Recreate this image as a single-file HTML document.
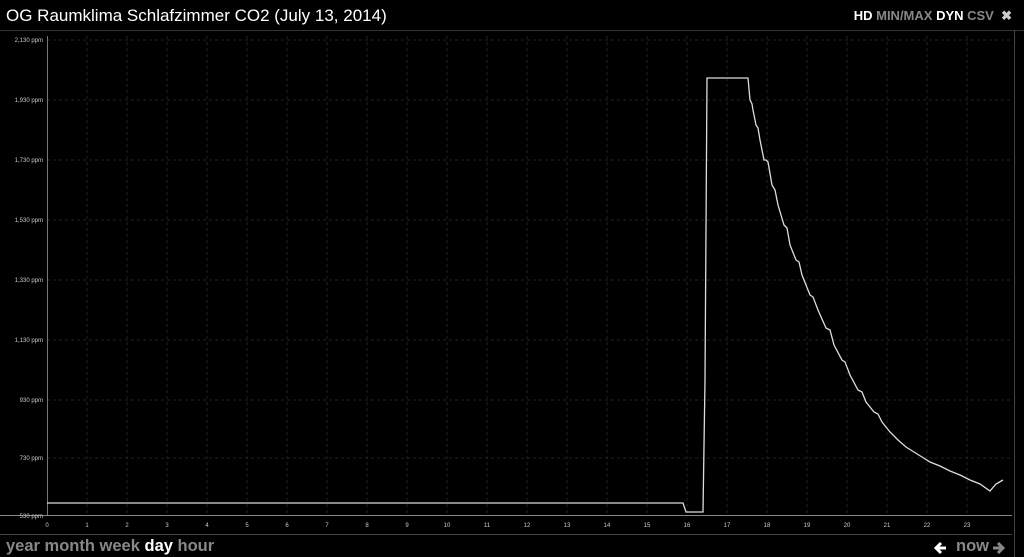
<!DOCTYPE html>
<html><head><style>
body{margin:0;width:1024px;height:557px;background:#000;overflow:hidden;font-family:"Liberation Sans",sans-serif;position:relative}
.t{position:absolute;left:6px;top:6px;color:#fff;font-size:17px}
.tr{position:absolute;right:12px;top:8px;font-size:13px;font-weight:bold;color:#888}
.tr b{color:#fff}
.bl{position:absolute;left:6px;top:537px;font-size:16.5px;font-weight:bold;color:#888}
.bl b{color:#fff}
.br{position:absolute;left:956px;top:537px;font-size:16.5px;font-weight:bold;color:#888}
</style></head><body>
<div class="t">OG Raumklima Schlafzimmer CO2 (July 13, 2014)</div>
<div class="tr"><b>HD</b> MIN/MAX <b>DYN</b> CSV &nbsp;<b style="color:#ccc">✖</b></div>
<svg width="1024" height="557" style="position:absolute;left:0;top:0">
<line x1="0" y1="30.5" x2="1024" y2="30.5" stroke="#333"/>
<g stroke="#222" stroke-dasharray="3,3">
<line x1="87" y1="36" x2="87" y2="514"/><line x1="127" y1="36" x2="127" y2="514"/><line x1="167" y1="36" x2="167" y2="514"/><line x1="207" y1="36" x2="207" y2="514"/><line x1="247" y1="36" x2="247" y2="514"/><line x1="287" y1="36" x2="287" y2="514"/><line x1="327" y1="36" x2="327" y2="514"/><line x1="367" y1="36" x2="367" y2="514"/><line x1="407" y1="36" x2="407" y2="514"/><line x1="447" y1="36" x2="447" y2="514"/><line x1="487" y1="36" x2="487" y2="514"/><line x1="527" y1="36" x2="527" y2="514"/><line x1="567" y1="36" x2="567" y2="514"/><line x1="607" y1="36" x2="607" y2="514"/><line x1="647" y1="36" x2="647" y2="514"/><line x1="687" y1="36" x2="687" y2="514"/><line x1="727" y1="36" x2="727" y2="514"/><line x1="767" y1="36" x2="767" y2="514"/><line x1="807" y1="36" x2="807" y2="514"/><line x1="847" y1="36" x2="847" y2="514"/><line x1="887" y1="36" x2="887" y2="514"/><line x1="927" y1="36" x2="927" y2="514"/><line x1="967" y1="36" x2="967" y2="514"/>
<line x1="47" y1="40" x2="1010" y2="40"/><line x1="47" y1="100" x2="1010" y2="100"/><line x1="47" y1="160" x2="1010" y2="160"/><line x1="47" y1="220" x2="1010" y2="220"/><line x1="47" y1="280" x2="1010" y2="280"/><line x1="47" y1="340" x2="1010" y2="340"/><line x1="47" y1="400" x2="1010" y2="400"/><line x1="47" y1="458" x2="1010" y2="458"/>
</g>
<line x1="47.5" y1="36" x2="47.5" y2="515" stroke="#777"/>
<line x1="0" y1="515.5" x2="1012" y2="515.5" stroke="#888"/>
<line x1="0" y1="534.5" x2="1012" y2="534.5" stroke="#444"/>
<line x1="1014.5" y1="30" x2="1014.5" y2="557" stroke="#444"/>
<g fill="#ccc" font-size="6" text-anchor="end">
<text x="43" y="42">2,130 ppm</text><text x="43" y="102">1,930 ppm</text><text x="43" y="162">1,730 ppm</text><text x="43" y="222">1,530 ppm</text><text x="43" y="282">1,330 ppm</text><text x="43" y="342">1,130 ppm</text><text x="43" y="402">930 ppm</text><text x="43" y="460">730 ppm</text><text x="43" y="518">530 ppm</text>
</g>
<g fill="#ccc" font-size="6" text-anchor="middle">
<text x="47" y="527">0</text><text x="87" y="527">1</text><text x="127" y="527">2</text><text x="167" y="527">3</text><text x="207" y="527">4</text><text x="247" y="527">5</text><text x="287" y="527">6</text><text x="327" y="527">7</text><text x="367" y="527">8</text><text x="407" y="527">9</text><text x="447" y="527">10</text><text x="487" y="527">11</text><text x="527" y="527">12</text><text x="567" y="527">13</text><text x="607" y="527">14</text><text x="647" y="527">15</text><text x="687" y="527">16</text><text x="727" y="527">17</text><text x="767" y="527">18</text><text x="807" y="527">19</text><text x="847" y="527">20</text><text x="887" y="527">21</text><text x="927" y="527">22</text><text x="967" y="527">23</text>
</g>
<polyline fill="none" stroke="#ddd" stroke-width="1.3" points="47,503 683,503 686,512 703,512 705,380 707,78 748,78 750,100 752,104 753,110 756,125 758,128 760,140 764,160 766,160 768,162 772,185 775,190 778,205 784,225 787,228 790,245 796,260 799,262 802,275 810,295 813,297 818,310 826,328 830,330 834,345 842,360 845,362 850,375 858,390 862,392 866,402 874,412 878,414 882,422 890,432 898,440 906,447 914,452 922,457 930,462 940,466 950,471 960,475 970,480 980,484 990,491 996,484 1003,480"/>
<path d="M936 548 H946 M941 543 L936 548 L941 553" stroke="#fff" stroke-width="3" fill="none"/>
<path d="M993 548 H1003 M998 543 L1003 548 L998 553" stroke="#888" stroke-width="3" fill="none"/>
</svg>
<div class="bl">year month week <b>day</b> hour</div>
<div class="br">now</div>
</body></html>
